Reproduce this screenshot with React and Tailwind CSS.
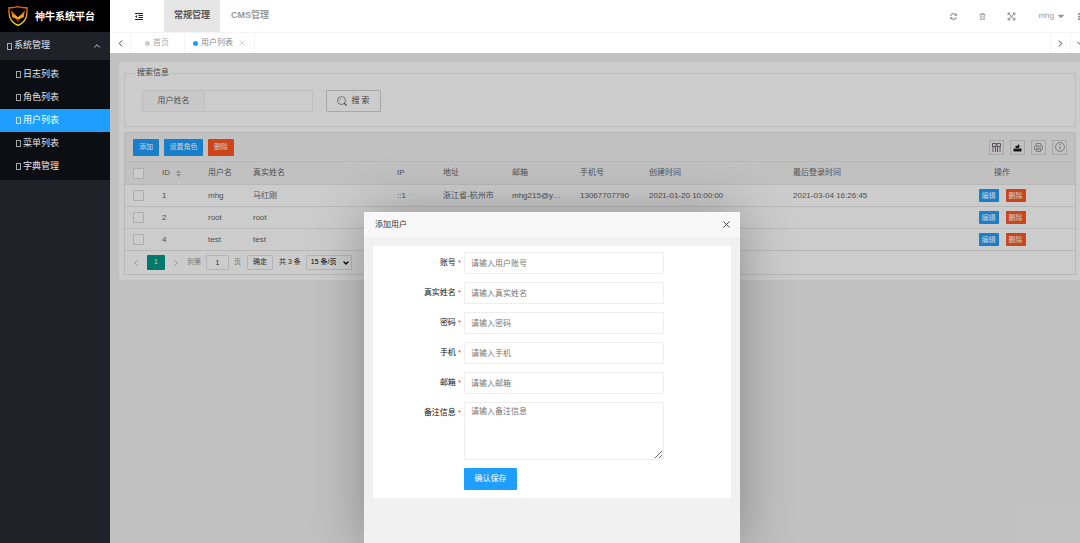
import React from "react";
import { ChevronLeft, ChevronRight, ChevronDown, ChevronUp, X } from "lucide-react";
import { FaSyncAlt, FaRegTrashAlt, FaExpandArrowsAlt, FaCaretDown } from "react-icons/fa";

// ------------------------------
// Data
// ------------------------------
const MENU = ["日志列表", "角色列表", "用户列表", "菜单列表", "字典管理"];

const USERS = [
  {
    id: 1,
    username: "mhg",
    realName: "马红刚",
    ip: "::1",
    address: "浙江省-杭州市",
    email: "mhg215@y…",
    phone: "13067707790",
    created: "2021-01-20 10:00:00",
    lastLogin: "2021-03-04 16:26:45",
  },
  { id: 2, username: "root", realName: "root" },
  { id: 4, username: "test", realName: "test" },
];

const FIELDS = [
  { name: "account", label: "账号", placeholder: "请输入用户账号" },
  { name: "realName", label: "真实姓名", placeholder: "请输入真实姓名" },
  { name: "password", label: "密码", placeholder: "请输入密码", type: "password" },
  { name: "phone", label: "手机", placeholder: "请输入手机" },
  { name: "email", label: "邮箱", placeholder: "请输入邮箱" },
];

// ------------------------------
// Icons
// ------------------------------
const Logo = () => (
  <svg viewBox="0 0 60 60" className="w-5 h-[22px] shrink-0" fill="none">
    <defs>
      <linearGradient id="shield" x1="0" y1="0" x2="0" y2="1">
        <stop offset="0" stopColor="#e8561c" />
        <stop offset="0.5" stopColor="#f39a1d" />
        <stop offset="1" stopColor="#f8f02a" />
      </linearGradient>
    </defs>
    <path
      d="M3 5c10 1 18 0 27-3 9 3 17 4 27 3 1 25-2 42-27 53C5 47 2 30 3 5z"
      stroke="url(#shield)"
      strokeWidth="4"
    />
    <path d="M9 13l10 11 11 10 11-10 10-11-4 21-9 3-8 9-8-9-9-3z" fill="url(#shield)" />
    <path d="M24 38h12l-3 9h-6z" fill="#b3141c" />
  </svg>
);

const FoldIcon = () => (
  <svg viewBox="0 0 16 14" className="w-2 h-[7px]" stroke="#222" strokeWidth="2">
    <path d="M0 1h16M7 5h9M7 9h9M0 13h16" />
    <path d="M0 7l4-3v6z" fill="#222" stroke="none" />
  </svg>
);

const SearchIcon = () => (
  <svg viewBox="0 0 20 20" className="w-2.5 h-2.5" fill="none" stroke="#666" strokeWidth="1.4">
    <circle cx="9" cy="9" r="8" />
    <path d="M5 9a4 4 0 0 1 3-4" strokeWidth="1" />
    <path d="M14 14l5 5" strokeWidth="2.4" />
  </svg>
);

const ColumnsIcon = () => (
  <svg viewBox="0 0 18 18" className="w-[9px] h-[9px]" fill="none" stroke="#5b3f58" strokeWidth="1.6">
    <path d="M1 1h7v6H1zM10 1h7v6h-7zM2 7v11M7 7v11M11 7v11M16 7v11" />
  </svg>
);

const ExportIcon = () => (
  <svg viewBox="0 0 18 18" className="w-[9px] h-[9px]" fill="#222">
    <path d="M10 2l5 5h-3v3H6V8L3 9q1-4 7-4z" />
    <path d="M1 11h16v6H1z" />
  </svg>
);

const PrintIcon = () => (
  <svg viewBox="0 0 18 18" className="w-[9px] h-[9px]" fill="none" stroke="#888" strokeWidth="1.6">
    <path d="M4 6V2q0-1 1-1h8q1 0 1 1v4M4 14H3q-2 0-2-2V8q0-2 2-2h12q2 0 2 2v4q0 2-2 2h-1" />
    <path d="M5 10h8v7H5zM7 13h4" />
  </svg>
);

const InfoIcon = () => (
  <svg viewBox="0 0 18 18" className="w-2.5 h-2.5" fill="none" stroke="#888" strokeWidth="1.4">
    <circle cx="9" cy="9" r="8" />
    <path d="M9 8v5M9 4v2" strokeWidth="1.8" />
  </svg>
);

const SortIcon = () => (
  <svg viewBox="0 0 10 14" className="w-[5px] h-[7px]" fill="#b2b2b2">
    <path d="M5 0l5 6H0zM5 14l5-6H0z" />
  </svg>
);

const MoreIcon = () => (
  <svg viewBox="0 0 4 16" className="w-0.5 h-[7px] shrink-0" fill="#888">
    <path d="M0 0h4v4H0zM0 6h4v4H0zM0 12h4v4H0z" />
  </svg>
);

// placeholder box in front of each menu entry
const Glyph = () => <span className="w-[5px] h-[7px] border border-current opacity-70" />;

// ------------------------------
// Sidebar
// ------------------------------
const Sidebar = () => (
  <aside className="w-[110px] shrink-0 bg-[#20222a] text-[#e4e4e6] text-[9px]">
    <div className="h-8 flex items-center gap-[7px] pl-2 bg-black">
      <Logo />
      <h1 className="text-[10px] font-bold text-white">神牛系统平台</h1>
    </div>
    <nav>
      <button className="w-full h-7 flex items-center gap-0.5 pl-[7px] pr-2">
        <Glyph />
        <span>系统管理</span>
        <ChevronUp size={10} className="ml-auto" />
      </button>
      <ul className="bg-[#0b0e13] pt-[3px] pb-0.5">
        {MENU.map((item) => (
          <li key={item}>
            <a
              href="#"
              className={
                item === "用户列表"
                  ? "h-[23px] flex items-center gap-0.5 pl-4 bg-[#1e9fff] text-white"
                  : "h-[23px] flex items-center gap-0.5 pl-4"
              }
            >
              <Glyph />
              {item}
            </a>
          </li>
        ))}
      </ul>
    </nav>
  </aside>
);

// ------------------------------
// Header + page tabs
// ------------------------------
const Header = () => (
  <header className="h-8 flex items-center bg-white text-[#999] text-[8px] overflow-hidden">
    <button className="w-[54px] flex justify-center pl-1" aria-label="fold">
      <FoldIcon />
    </button>
    <a href="#" className="h-8 flex items-center px-[10px] bg-[#e6e6e6] text-[#555] text-[9px] font-bold">
      常规管理
    </a>
    <a href="#" className="h-8 flex items-center px-[11px] text-[9px] font-bold">
      CMS管理
    </a>
    <div className="ml-auto flex items-center shrink-0">
      <button className="w-[29px] flex justify-center" aria-label="refresh">
        <FaSyncAlt size={7} />
      </button>
      <button className="w-[29px] flex justify-center" aria-label="clear">
        <FaRegTrashAlt size={7} />
      </button>
      <button className="w-[29px] flex justify-center" aria-label="fullscreen">
        <FaExpandArrowsAlt size={9} />
      </button>
      <button className="flex items-center gap-0.5 pl-3 pr-3">
        mhg
        <FaCaretDown size={10} />
      </button>
      <MoreIcon />
    </div>
  </header>
);

const PageTabs = () => (
  <div className="h-[21px] flex bg-white border-t border-[#f4f4f4] text-[8px] text-[#888] overflow-hidden">
    <button className="w-[21px] flex items-center justify-center border-r border-[#f4f4f4] text-[#333]" aria-label="left">
      <ChevronLeft size={11} />
    </button>
    <a href="#" className="w-[54px] flex items-center gap-[3px] pl-3.5 border-r border-[#f4f4f4] text-[#aaa]">
      <span className="size-[5px] rounded-full bg-[#ccc]" />
      首页
    </a>
    <a href="#" className="w-[70px] flex items-center gap-[3px] pl-2 border-r border-[#f4f4f4]">
      <span className="size-[5px] rounded-full bg-[#1e9fff]" />
      用户列表
      <X size={8} className="ml-0.5 text-[#bbb]" />
    </a>
    <button className="ml-auto w-[21px] flex items-center justify-center border-x border-[#f4f4f4] text-[#333]" aria-label="right">
      <ChevronRight size={11} />
    </button>
    <button className="w-[9px] flex items-center pl-1 text-[#333]" aria-label="more">
      <ChevronDown size={11} className="shrink-0" />
    </button>
  </div>
);

// ------------------------------
// Search box
// ------------------------------
const SearchBox = () => (
  <fieldset className="border border-[#eee] pl-[17px] pt-[11px] pb-3.5">
    <legend className="ml-[-7px] px-0.5 leading-3 text-[#555]">搜索信息</legend>
    <form className="flex">
      <label
        htmlFor="keyword"
        className="w-[63px] h-[22px] flex items-center justify-center bg-[#fbfbfb] border border-[#eee] rounded-l-[1px]"
      >
        用户姓名
      </label>
      <input id="keyword" className="w-[108px] h-[22px] px-1.5 border border-l-0 border-[#eee] rounded-r-[1px]" />
      <button
        type="button"
        className="w-[55px] h-[22px] ml-[13px] flex items-center justify-center gap-1 border border-[#d2d2d2] rounded-[1px] text-[#555]"
      >
        <SearchIcon />
        搜 索
      </button>
    </form>
  </fieldset>
);

// ------------------------------
// User table
// ------------------------------
const ToolButton = ({ label, children }) => (
  <button aria-label={label} className="size-[15px] flex items-center justify-center border border-[#d2d2d2]">
    {children}
  </button>
);

const CheckBox = ({ label }) => (
  <input
    type="checkbox"
    aria-label={label}
    className="block size-[11px] appearance-none rounded-[1px] border border-[#d8d8d8] bg-white"
  />
);

const UserTable = () => (
  <section className="mt-[5px] border border-[#e6e6e6]">
    <div className="h-7 flex items-center px-2 bg-[#f2f2f2] text-white text-[7px]">
      <button className="w-[26px] h-[17px] rounded-[1px] bg-[#1e9fff]">添加</button>
      <button className="w-[39px] h-[17px] ml-[5px] rounded-[1px] bg-[#1e9fff]">设置角色</button>
      <button className="w-[26px] h-[17px] ml-[5px] rounded-[1px] bg-[#ff5722]">删除</button>
      <div className="ml-auto flex gap-[6px]">
        <ToolButton label="columns">
          <ColumnsIcon />
        </ToolButton>
        <ToolButton label="export">
          <ExportIcon />
        </ToolButton>
        <ToolButton label="print">
          <PrintIcon />
        </ToolButton>
        <ToolButton label="info">
          <InfoIcon />
        </ToolButton>
      </div>
    </div>

    <table className="w-full table-fixed text-left whitespace-nowrap">
      <thead className="bg-[#f2f2f2]">
        <tr className="h-[23px] border-y border-[#e6e6e6] [&>th]:font-normal [&>th]:pl-2">
          <th className="w-[29px]">
            <CheckBox label="全选" />
          </th>
          <th className="w-[46px]">
            <span className="flex items-center gap-[6px]">
              ID <SortIcon />
            </span>
          </th>
          <th className="w-[45px]">用户名</th>
          <th className="w-[144px]">真实姓名</th>
          <th className="w-[46px]">IP</th>
          <th className="w-[69px]">地址</th>
          <th className="w-[68px]">邮箱</th>
          <th className="w-[69px]">手机号</th>
          <th className="w-[144px]">创建时间</th>
          <th className="w-[136px]">最后登录时间</th>
          <th className="text-center">操作</th>
        </tr>
      </thead>
      <tbody>
        {USERS.map((u) => (
          <tr key={u.id} className="h-[22px] border-b border-[#e6e6e6] [&>td]:pl-2">
            <td>
              <CheckBox label={u.username} />
            </td>
            <td>{u.id}</td>
            <td>{u.username}</td>
            <td>{u.realName}</td>
            <td>{u.ip}</td>
            <td>{u.address}</td>
            <td>{u.email}</td>
            <td>{u.phone}</td>
            <td>{u.created}</td>
            <td>{u.lastLogin}</td>
            <td>
              <div className="flex justify-center gap-[7px] text-white text-[7px] leading-3">
                <button className="w-5 h-[13px] rounded-[1px] bg-[#1e9fff]">编辑</button>
                <button className="w-5 h-[13px] rounded-[1px] bg-[#ff5722]">删除</button>
              </div>
            </td>
          </tr>
        ))}
      </tbody>
    </table>

    <div className="h-[23px] flex items-center pl-1.5 text-[7px] text-[#333]">
      <button className="w-4 flex justify-center pr-1.5 text-[#aaa]" aria-label="prev">
        <ChevronLeft size={10} className="shrink-0" />
      </button>
      <button className="w-[18px] h-[15px] rounded-[1px] bg-[#009688] text-white">1</button>
      <button className="w-[22px] flex justify-center text-[#aaa]" aria-label="next">
        <ChevronRight size={10} />
      </button>
      <label htmlFor="page" className="text-[#999]">
        到第
      </label>
      <input
        id="page"
        defaultValue="1"
        className="w-[23px] h-[15px] mx-[5px] border border-[#e2e2e2] rounded-[1px] text-center"
      />
      <span className="text-[#999]">页</span>
      <button className="w-[26px] h-[15px] mx-[6px] border border-[#e2e2e2] rounded-[1px]">确定</button>
      <span>共 3 条</span>
      <div className="relative ml-[5px]">
        <select
          aria-label="每页条数"
          className="block w-[46px] h-[15px] pl-1 appearance-none border border-[#e2e2e2] rounded-[1px] text-black"
          defaultValue="15"
        >
          <option value="15">15 条/页</option>
          <option value="30">30 条/页</option>
        </select>
        <ChevronDown size={8} strokeWidth={4} className="absolute right-0.5 top-1 text-black pointer-events-none" />
      </div>
    </div>
  </section>
);

// ------------------------------
// "Add user" dialog
// ------------------------------
const FieldLabel = ({ name, label }) => (
  <label htmlFor={name} className="w-[91px] h-[22px] pr-[3px] flex items-center justify-end gap-0.5 text-[#111]">
    {label}
    <span className="text-[#f33]">*</span>
  </label>
);

const AddUserDialog = () => (
  <div
    role="dialog"
    aria-label="添加用户"
    className="absolute left-[254px] top-[159px] -bottom-1 w-[376px] bg-[#f1f1f1] shadow-[1px_1px_50px_rgba(0,0,0,0.3)] text-[#333]"
  >
    <div className="h-[25px] flex items-center justify-between pl-[11px] pr-2 bg-[#f8f8f8]">
      <h2>添加用户</h2>
      <button aria-label="close">
        <X size={11} />
      </button>
    </div>
    <form className="m-[9px] pt-[6px] pb-2 pr-[67px] bg-white rounded-xs flex flex-col gap-2">
      {FIELDS.map((f) => (
        <div key={f.name} className="flex">
          <FieldLabel name={f.name} label={f.label} />
          <input
            id={f.name}
            type={f.type || "text"}
            placeholder={f.placeholder}
            className="flex-1 h-[22px] px-1.5 border border-[#eee] rounded-[1px] placeholder:text-[#757575]"
          />
        </div>
      ))}
      <div className="flex">
        <FieldLabel name="remark" label="备注信息" />
        <textarea
          id="remark"
          placeholder="请输入备注信息"
          className="flex-1 h-[58px] px-1.5 py-[3px] leading-3 border border-[#eee] rounded-[1px] placeholder:text-[#757575]"
        />
      </div>
      <button type="button" className="w-[53px] h-[22px] ml-[91px] rounded-[1px] bg-[#1e9fff] text-white">
        确认保存
      </button>
    </form>
  </div>
);

// ------------------------------
// Page
// ------------------------------
const App = () => (
  <div className="h-screen flex overflow-hidden text-[8px] text-[#666] font-['Liberation_Sans','Noto_Sans_CJK_SC',sans-serif]">
    <Sidebar />
    <div className="flex-1 min-w-0 flex flex-col">
      <Header />
      <PageTabs />
      <main className="relative flex-1 overflow-hidden bg-[#f2f2f2] pl-[9px] pt-[9px]">
        <div className="bg-white rounded-l-xs pl-[5px] pr-1 py-[5px]">
          <SearchBox />
          <UserTable />
        </div>
        <div className="absolute inset-0 bg-black/20" />
        <AddUserDialog />
      </main>
    </div>
  </div>
);

export default App;
